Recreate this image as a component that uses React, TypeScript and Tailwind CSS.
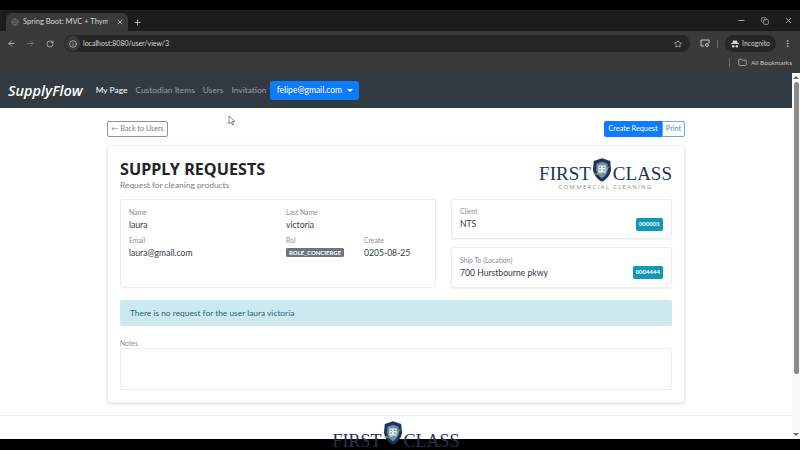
import { ArrowLeft, ArrowRight, RotateCw, Info, Star, X, Plus, Minus, Copy, MoreVertical, Folder, Globe } from "lucide-react";

function Field({ label, value, className = "" }: { label: string; value: string; className?: string }) {
  return (
    <div className={className}>
      <div className="text-[6.8px] leading-[9px] text-[#8a9096]">{label}</div>
      <div className="text-[8.6px] leading-[12px] text-[#343a40] mt-[2px]">{value}</div>
    </div>
  );
}

function Shield() {
  return (
    <svg width="20" height="26" viewBox="0 0 22 26" className="-mt-[8px] mx-[1px] shrink-0">
      <path d="M11 0 L20 3 L21 13 Q19 22 11 26 Q3 22 1 13 L2 3 Z" fill="#1c3557" />
      <path d="M11 4 L17 6 L17.5 13 Q16 19 11 22 Q6 19 4.5 13 L5 6 Z" fill="#6f8cab" />
      <rect x="7" y="8" width="8" height="8" fill="#e8eef3" />
      <path d="M8 10h2M12 10h2M8 13h2M12 13h2" stroke="#46688c" strokeWidth="1" />
      <path d="M1 17 Q11 20 19 9" stroke="#9ccf6a" strokeWidth="1" fill="none" />
    </svg>
  );
}

export default function App() {
  return (
    <div className="h-[450px] w-[800px] overflow-hidden flex flex-col bg-black font-['Lato',sans-serif]">
      <div className="h-[10px] shrink-0 bg-black" />

      {/* tab strip */}
      <div className="h-[21px] shrink-0 bg-[#1c1c1c] flex items-end pl-[6px] pr-[7px]">
        <div className="w-[122px] h-[18px] bg-[#3a3a3a] rounded-t-[6px] flex items-center pl-[5px] pr-[4px]">
          <Globe size={8} className="text-[#777] shrink-0" />
          <span className="ml-[4px] w-[85px] text-[7.5px] text-[#d5d5d5] whitespace-nowrap overflow-hidden">Spring Boot: MVC + Thymeleaf</span>
          <div className="flex-1" />
          <X size={8} className="text-[#ddd] shrink-0" />
        </div>
        <Plus size={9} className="text-[#ddd] ml-[5px] mb-[4px]" />
        <div className="flex-1" />
        <div className="flex items-center gap-[15px] mb-[6px] text-[#ccc]">
          <Minus size={9} />
          <Copy size={8} />
          <X size={9} />
        </div>
      </div>

      {/* toolbar */}
      <div className="h-[23px] shrink-0 bg-[#3a3a3a] flex items-center pl-[7px] pr-[8px] pt-[2px] text-[#d0d0d0]">
        <ArrowLeft size={9} />
        <ArrowRight size={9} className="ml-[10px] text-[#808080]" />
        <RotateCw size={8} className="ml-[11px]" />
        <div className="ml-[10px] flex-1 h-[17px] rounded-full bg-[#262626] flex items-center pl-[1px] pr-[8px]">
          <div className="w-[15px] h-[15px] rounded-full bg-[#3a3a3a] flex items-center justify-center">
            <Info size={8} />
          </div>
          <span className="ml-[3px] text-[7px] text-[#d8d8d8]">localhost:8080/user/view/3</span>
          <div className="flex-1" />
          <Star size={8} />
        </div>
        <svg width="10" height="9" viewBox="0 0 10 9" fill="none" stroke="#c8c8c8" strokeWidth="1" className="ml-[10px]">
          <path d="M5 1H1v6h3M5 1h4v3" />
          <circle cx="7" cy="6" r="1.5" />
        </svg>
        <div className="w-px h-[8px] bg-[#666] ml-[7px]" />
        <div className="ml-[7px] w-[51px] h-[17px] rounded-full bg-[#262626] flex items-center justify-center gap-[3px]">
          <svg width="8" height="8" viewBox="0 0 8 8" fill="#d0d0d0">
            <path d="M2 0.5h4l0.7 2.5H8v1H0V3h1.3z" />
            <circle cx="2.2" cy="6.2" r="1.3" />
            <circle cx="5.8" cy="6.2" r="1.3" />
          </svg>
          <span className="text-[6.8px] text-[#d0d0d0]">Incognito</span>
        </div>
        <MoreVertical size={9} className="ml-[7px]" />
      </div>

      {/* bookmarks bar */}
      <div className="h-[19px] shrink-0 bg-[#3a3a3a] flex items-center justify-end pr-[8px] pb-[2px]">
        <div className="w-px h-[9px] bg-[#666] mr-[8px]" />
        <Folder size={9} className="text-[#c0c0c0]" />
        <span className="ml-[4px] text-[6.5px] text-[#c8c8c8]">All Bookmarks</span>
      </div>

      <div className="flex-1 min-h-0 flex">
        <div className="w-[792px] flex flex-col min-h-0 overflow-hidden bg-white">
          {/* navbar */}
          <nav className="h-[35px] shrink-0 bg-[#333b42] flex items-center pl-[8px]">
            <span className="text-white italic font-semibold text-[14.5px] font-['Open_Sans',sans-serif]">SupplyFlow</span>
            <span className="ml-[13px] text-[8.4px] text-white">My Page</span>
            <span className="ml-[8px] text-[8.4px] text-[#9a9ea3]">Custodian Items</span>
            <span className="ml-[8px] text-[8.4px] text-[#9a9ea3]">Users</span>
            <span className="ml-[8px] text-[8.4px] text-[#9a9ea3]">Invitation</span>
            <div className="ml-[4px] w-[89px] h-[19px] rounded-[3px] bg-[#0d7bfd] flex items-center justify-center gap-[5px]">
              <span className="text-[8.5px] text-white">felipe@gmail.com</span>
              <span className="w-0 h-0 border-x-[3px] border-x-transparent border-t-[3px] border-t-white" />
            </div>
          </nav>

          {/* page */}
          <main className="flex-1 min-h-0 bg-[#fefefe] flex flex-col items-center pt-[13px] relative">
            <div className="w-[578px] flex items-center justify-between h-[16px]">
              <div className="w-[61px] h-[16px] border border-[#8d9499] rounded-[2px] flex items-center justify-center text-[7.2px] text-[#7b8187] whitespace-nowrap">
                ← Back to Users
              </div>
              <div className="flex h-[16px]">
                <div className="w-[58px] bg-[#0d7bfd] rounded-l-[2px] text-white text-[7.3px] flex items-center justify-center whitespace-nowrap">Create Request</div>
                <div className="w-[23px] border border-[#6aa9e8] rounded-r-[2px] text-[#4b8fd6] text-[7.3px] flex items-center justify-center">Print</div>
              </div>
            </div>

            <section className="w-[578px] h-[258px] mt-[8px] shrink-0 border border-[#eeeeee] rounded-[3px] shadow-[0_1px_3px_rgba(0,0,0,0.12)] px-[12px] pt-[7px]">
              <div className="flex justify-between h-[46px]">
                <div className="pt-[5px]">
                  <h1 className="text-[16.2px] leading-[22px] font-bold font-['Noto_Sans',sans-serif] text-[#20252a]">SUPPLY REQUESTS</h1>
                  <p className="text-[8.4px] leading-[11px] text-[#7b8187]">Request for cleaning products</p>
                </div>
                <div className="flex flex-col items-center pt-[12px]">
                  <div className="flex items-center h-[17px] text-[#1c3557] font-['Liberation_Serif',serif] text-[19px] leading-[17px]">
                    <span>FIRST</span>
                    <Shield />
                    <span>CLASS</span>
                  </div>
                  <div className="text-[6px] leading-[8px] tracking-[1.3px] text-[#8a8f94] font-['Open_Sans',sans-serif] mt-[1px]">
                    COMMERCIAL CLEANING
                  </div>
                </div>
              </div>

              <div className="flex justify-between">
                <div className="w-[316px] h-[89px] border border-[#ececec] rounded-[3px] pl-[8px] pt-[8px]">
                  <div className="flex">
                    <Field label="Name" value="laura" className="w-[157px]" />
                    <Field label="Last Name" value="victoria" />
                  </div>
                  <div className="flex mt-[5px]">
                    <Field label="Email" value="laura@gmail.com" className="w-[157px]" />
                    <div className="w-[78px]">
                      <div className="text-[6.8px] leading-[9px] text-[#8a9096]">Rol</div>
                      <span className="mt-[3px] block w-fit h-[9px] leading-[9px] px-[3px] rounded-[1.5px] bg-[#6c757d] text-white text-[6px] font-bold whitespace-nowrap">ROLE_CONCIERGE</span>
                    </div>
                    <Field label="Create" value="0205-08-25" />
                  </div>
                </div>

                <div className="w-[221px] flex flex-col gap-[8px]">
                  <div className="h-[40px] border border-[#ececec] rounded-[3px] shadow-[0_1px_1px_rgba(0,0,0,0.05)] px-[8px] pt-[7px] flex justify-between">
                    <Field label="Client" value="NTS" />
                    <span className="self-end mb-[7px] h-[13px] px-[3px] rounded-[2px] bg-[#1297b9] text-white text-[6px] font-bold leading-[11px]">000001</span>
                  </div>
                  <div className="h-[41px] border border-[#ececec] rounded-[3px] shadow-[0_1px_1px_rgba(0,0,0,0.05)] px-[8px] pt-[8px] flex justify-between">
                    <Field label="Ship To (Location)" value="700 Hurstbourne pkwy" />
                    <span className="self-end mb-[8px] h-[13px] px-[3px] rounded-[2px] bg-[#1297b9] text-white text-[6px] font-bold leading-[11px]">0004444</span>
                  </div>
                </div>
              </div>

              <div className="mt-[12px] h-[26px] rounded-[2px] bg-[#cbe9ef] flex items-center pl-[10px] text-[8.4px] text-[#2d6470]">
                There is no request for the user laura victoria
              </div>

              <div className="mt-[13px] text-[6.8px] leading-[9px] text-[#8a9096]">Notes</div>
              <div className="h-[42px] border border-[#eeeeee] rounded-[2px]" />
            </section>

            <div className="w-full mt-[12px] border-t border-[#eeeeee] shrink-0" />
            <div className="mt-[12px] shrink-0 flex items-start text-[#1c3557] font-['Liberation_Serif',serif] text-[18px] leading-[17px]">
              <span className="mt-[5px]">FIRST</span>
              <Shield />
              <span className="mt-[5px]">CLASS</span>
            </div>

            {/* mouse cursor */}
            <svg width="8" height="11" viewBox="0 0 8 11" className="absolute left-[228px] top-[7px]">
              <path d="M1 1v8l2-2 1.5 3 1.2-.6L4.3 6.5H7z" fill="#fff" stroke="#555" strokeWidth="0.7" />
            </svg>
          </main>
          <div className="h-[11px] shrink-0 bg-black" />
        </div>

        {/* scrollbar */}
        <div className="w-[8px] bg-[#fafafa] flex flex-col items-center">
          <span className="mt-[3px] w-0 h-0 border-x-[3px] border-x-transparent border-b-[3px] border-b-[#666]" />
          <div className="w-[5px] h-[292px] mt-[3px] rounded-full bg-[#8a8a8a]" />
          <div className="flex-1" />
          <span className="mb-[3px] w-0 h-0 border-x-[3px] border-x-transparent border-t-[3px] border-t-[#666]" />
          <div className="h-[11px] w-[8px] bg-black" />
        </div>
      </div>
    </div>
  );
}
